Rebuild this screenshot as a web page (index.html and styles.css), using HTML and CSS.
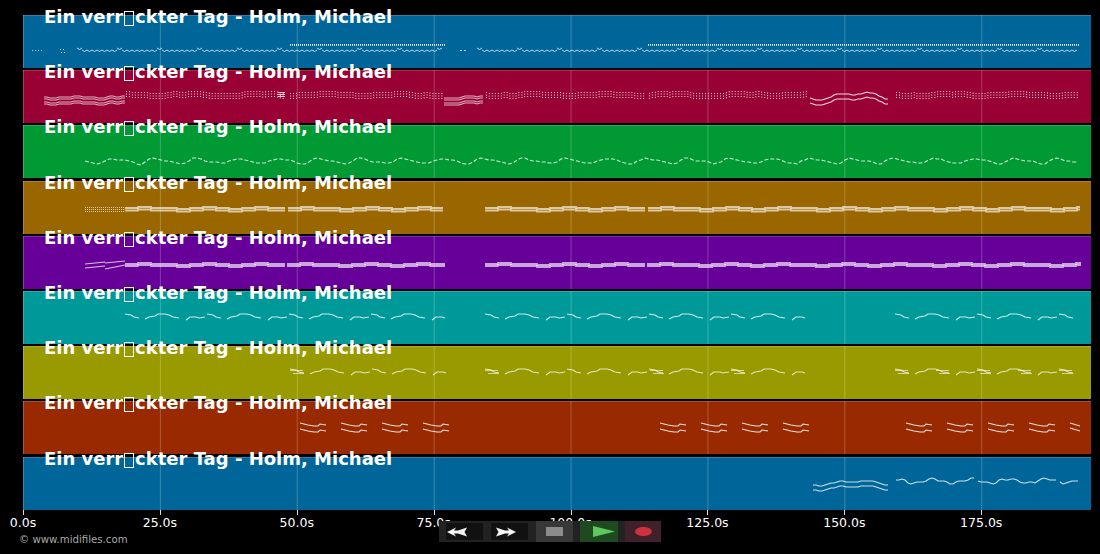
FILE: index.html
```html
<!DOCTYPE html>
<html lang="de">
<head>
<meta charset="utf-8" />
<title>Ein verrückter Tag - Holm, Michael</title>
<link rel="stylesheet" href="styles.css">
</head>

<body>

<div class="chart">
  <div class="tracks" id="tracks"></div>

  <div class="axis">
    <div class="tick"><span>0.0s</span></div>
    <div class="tick"><span>25.0s</span></div>
    <div class="tick"><span>50.0s</span></div>
    <div class="tick"><span>75.0s</span></div>
    <div class="tick"><span>100.0s</span></div>
    <div class="tick"><span>125.0s</span></div>
    <div class="tick"><span>150.0s</span></div>
    <div class="tick"><span>175.0s</span></div>
  </div>

  <div class="copyright">© www.midifiles.com</div>
</div>

<div class="controls">
  <button class="ctl ctl-rew">
    <svg width="21" height="10" viewBox="0 0 21 10"><path d="M0 5 L9 0.5 L7 3.5 H11 L20 0.5 L17.5 5 L20 9.5 L11 6.5 H7 L9 9.5 Z" fill="#f2f2f2"/></svg>
  </button>
  <button class="ctl ctl-fwd">
    <svg width="21" height="10" viewBox="0 0 21 10"><path d="M20 5 L11 0.5 L13 3.5 H9 L0 0.5 L2.5 5 L0 9.5 L9 6.5 H13 L11 9.5 Z" fill="#f2f2f2"/></svg>
  </button>
  <button class="ctl ctl-stop"><span class="stop-box"></span></button>
  <button class="ctl ctl-play">
    <svg width="22" height="11" viewBox="0 0 22 11"><path d="M0 0 L22 5.5 L0 11 Z" fill="#5fc85f"/></svg>
  </button>
  <button class="ctl ctl-rec"><span class="rec-dot"></span></button>
</div>

<script src="script.js"></script>

</body>
</html>
```

FILE: styles.css
```css
body { margin: 0; height: 554px; overflow: hidden; background-color: #000; color: #fff; font-family: "DejaVu Sans", sans-serif; }

.chart { padding: 15px 9px 0 23px; }

.tracks { display: flex; flex-direction: column; gap: 2.2px; }

.track {
  position: relative;
  height: 53px;
  border-top: 1px solid rgba(255, 255, 255, 0.18);
  box-sizing: border-box;
  background-image: linear-gradient(90deg, rgba(255, 255, 255, 0.22) 1px, transparent 1px);
  background-size: 136.9px 100%;
  background-position: 0 0;
}

.track svg { display: block; position: absolute; left: 0; top: -1px; }

.track-title {
  position: absolute;
  left: 21px;
  top: -10px;
  font-size: 18px;
  font-weight: bold;
  line-height: 22px;
  white-space: nowrap;
}

/* empty box where the name has a character the font does not have */
.tofu {
  display: inline-block;
  width: 8px;
  height: 13px;
  margin: 0 0.8px 0 1px;
  border: 1px solid #fff;
  vertical-align: -3px;
}

.blue { background-color: #006699; }
.crimson { background-color: #990033; }
.green { background-color: #009933; }
.brown { background-color: #996600; }
.purple { background-color: #660099; }
.teal { background-color: #009999; }
.olive { background-color: #999900; }
.rust { background-color: #992900; }

.axis { display: flex; }

.tick { flex: 0 0 136.9px; height: 25px; font-size: 12.5px; line-height: 15px; color: #fff; }
.tick::before { content: ""; display: block; width: 1px; height: 5px; background-color: #ddd; }
.tick span { display: inline-block; transform: translateX(-50%); }

.copyright { margin: -2px 0 0 -4px; font-size: 10.2px; line-height: 14px; color: #a8a8a8; }

.controls {
  position: absolute;
  left: 439px;
  top: 521px;
  width: 222px;
  height: 21px;
  display: flex;
  background-color: #222;
}

.ctl { border: none; padding: 0; height: 21px; display: flex; align-items: center; justify-content: center; }

.ctl-rew { width: 37px; margin-left: 7px; background-color: #111; justify-content: flex-start; padding-left: 1px; height: 17px; align-self: center; }
.ctl-fwd { width: 37px; margin-left: 8px; background-color: #111; justify-content: flex-start; padding-left: 5px; height: 17px; align-self: center; }
.ctl-stop { width: 37px; margin-left: 8px; background-color: #383838; }
.ctl-play { width: 38px; margin-left: 7px; background-color: #1f4a1f; padding-left: 13px; box-sizing: border-box; justify-content: flex-start; }
.ctl-rec { width: 36px; margin-left: 7px; background-color: #40202a; }

.stop-box { width: 17px; height: 9px; background-color: #8c8c8c; }
.rec-dot { width: 17px; height: 9px; border-radius: 50%; background-color: #cc3340; }
```

FILE: script.js
```js
// draws the tracks and their note lines, x is page x, y is from the top of the band
const NS = "http://www.w3.org/2000/svg";

function stepY(x, y, amp, period) {
  return y + Math.round(amp * Math.sin(x / period) + amp * 0.5 * Math.sin(x / (period * 0.37)));
}

function addLine(svg, d, dash, op, width) {
  const p = document.createElementNS(NS, "path");
  p.setAttribute("d", d);
  p.setAttribute("fill", "none");
  p.setAttribute("stroke", "#fff");
  p.setAttribute("stroke-width", width || 1.1);
  p.setAttribute("opacity", op || 0.8);
  if (dash) p.setAttribute("stroke-dasharray", dash);
  svg.appendChild(p);
}

function wavePath(x0, x1, y, amp, period) {
  let d = "";
  for (let x = x0; x <= x1; x += 3) {
    d += (d ? "L" : "M") + x + " " + stepY(x, y, amp, period);
  }
  return d;
}

// row of small arcs with a little jump every 40px
function scallopPath(x0, x1, y) {
  let d = "";
  for (let x = x0; x + 5 <= x1; x += 5) {
    const up = (x - x0) % 40 < 5 ? -2 : 0;
    d += "M" + x + " " + (y + up) + "q2.5 3 5 0";
  }
  return d;
}

// falling line that climbs back, period 41
function sawPath(x0, x1, y) {
  let d = "";
  for (let x = x0; x <= x1; x += 4) {
    const t = (x - x0 + 14) % 41;
    const off = t < 29 ? -3 + t * 6 / 29 : 3 - (t - 29) * 6 / 12;
    d += (d ? "L" : "M") + x + " " + Math.round(y + off + 0.6 * Math.sin(x * 1.3));
  }
  return d;
}

// flat stretches that shift a pixel now and then
function blockPath(x0, x1, y) {
  const steps = [0, -1, 0, 0, 1, 0, -1, 0, 1];
  let d = "M" + x0 + " " + y;
  let i = 0;
  for (let x = x0; x < x1; x += 13) {
    d += "V" + (y + steps[i % steps.length]) + "H" + Math.min(x + 13, x1);
    i++;
  }
  return d;
}

// one repeated tune, cut off at x1
const MOTIF = [
  [[0, -2], [6, -1], [9, 1], [14, 2]],
  [[20, 3], [24, 1], [30, 0], [33, -2], [40, -2], [44, -1], [48, 1], [54, 2]],
  [[61, 4], [65, 1], [71, 1], [74, 2], [80, 1]]
];

function motifPaths(x0, x1, y, period) {
  const out = [];
  for (let s = x0; s < x1; s += period) {
    MOTIF.forEach(function (st) {
      const pts = st.filter(function (p) { return s + p[0] <= x1; });
      if (pts.length > 1) {
        out.push("M" + pts.map(function (p) { return (s + p[0]) + " " + (y + p[1]); }).join("L"));
      }
    });
  }
  return out;
}

// short falling pairs, used for the rust band
function fallPaths(x0, x1, y, period) {
  const out = [];
  for (let s = x0; s + 20 <= x1 + 2; s += period) {
    [0, 6].forEach(function (dy) {
      out.push("M" + s + " " + (y + dy) + "L" + (s + 8) + " " + (y + dy + 2) + "L" + (s + 14) + " " + (y + dy + 3) + "L" + (s + 18) + " " + (y + dy + 3) + "L" + (s + 20) + " " + (y + dy + 1) + "L" + (s + 26) + " " + (y + dy + 2));
    });
  }
  return out;
}

const TRACKS = [
  { color: "blue", draw: function (s) {
    addLine(s, "M32 35.5H42", "1 2", 0.7);
    addLine(s, "M60 34.5H65M61 37.5H65", "1 2", 0.7);
    addLine(s, "M460 35.5H466", "2 2", 0.7);
    [[77, 445], [477, 1080]].forEach(function (r) {
      addLine(s, scallopPath(r[0], r[1], 35), "", 0.75, 1);
    });
    [[290, 445], [648, 1080]].forEach(function (r) {
      addLine(s, "M" + r[0] + " 29.5H" + r[1], "1 1", 0.95);
      addLine(s, "M" + r[0] + " 30.5H" + r[1], "1 1", 0.7);
    });
  } },
  { color: "crimson", draw: function (s) {
    [[44, 125], [444, 485]].forEach(function (r) {
      [27, 29, 32, 34].forEach(function (y) {
        addLine(s, wavePath(r[0], r[1], y, 1, 7), "", 0.7);
      });
    });
    [[126, 285], [290, 443], [486, 645], [649, 810], [896, 1080]].forEach(function (r) {
      [22.5, 25, 27.5].forEach(function (y) {
        addLine(s, wavePath(r[0], r[1], y, 1, 11), "1 2", 0.85);
      });
    });
    addLine(s, "M278 22.5H285M278 24.5H285M278 26.5H285", "", 0.8);
    addLine(s, wavePath(810, 890, 26, 3, 14), "", 0.85);
    addLine(s, wavePath(810, 890, 31, 3, 14), "", 0.85);
  } },
  { color: "green", draw: function (s) {
    addLine(s, sawPath(85, 1080, 36), "4 2", 0.8);
  } },
  { color: "brown", draw: function (s) {
    [26.5, 28.5, 30.5].forEach(function (y) {
      addLine(s, "M85 " + y + "H125", "1 1", 0.65);
    });
    [[125, 285], [288, 443], [485, 645], [648, 1080]].forEach(function (r) {
      addLine(s, blockPath(r[0], r[1], 27), "", 0.65, 1.8);
      addLine(s, blockPath(r[0], r[1], 29.5), "", 0.65, 1.8);
    });
  } },
  { color: "purple", draw: function (s) {
    addLine(s, "M85 28L105 26M105 27L125 25M85 32L105 30M105 33L125 29", "", 0.75);
    [[125, 285], [287, 445], [485, 645], [647, 1081]].forEach(function (r) {
      addLine(s, blockPath(r[0], r[1], 28), "", 0.65, 1.8);
      addLine(s, blockPath(r[0], r[1], 30), "", 0.65, 1.8);
    });
  } },
  { color: "teal", draw: function (s) {
    [[125, 448], [485, 808], [895, 1075]].forEach(function (r) {
      motifPaths(r[0], r[1], 25, 82).forEach(function (d) { addLine(s, d, "", 0.8); });
    });
  } },
  { color: "olive", draw: function (s) {
    [[290, 448], [485, 808], [895, 1075]].forEach(function (r) {
      motifPaths(r[0], r[1], 25, 82).forEach(function (d) { addLine(s, d, "", 0.75); });
    });
    [290, 895, 936, 977, 1018, 1059, 485, 650, 731].forEach(function (x) {
      addLine(s, "M" + x + " 24.5H" + (x + 13) + "M" + (x + 3) + " 27.5H" + (x + 14), "", 0.6);
    });
  } },
  { color: "rust", draw: function (s) {
    [[300, 448], [660, 808], [906, 1060]].forEach(function (r) {
      fallPaths(r[0], r[1], 22, 41).forEach(function (d) { addLine(s, d, "", 0.85); });
    });
    addLine(s, "M1070 22L1080 25M1070 27L1080 30", "", 0.85);
  } },
  { color: "blue", draw: function (s) {
    addLine(s, wavePath(813, 890, 26, 2, 14), "", 0.8);
    addLine(s, wavePath(813, 890, 31, 2, 14), "", 0.8);
    [[896, 976], [978, 1058], [1060, 1078]].forEach(function (r) {
      addLine(s, wavePath(r[0], r[1], 24, 2, 6), "", 0.8);
    });
  } }
];

const tracks = document.getElementById("tracks");

TRACKS.forEach(function (t) {
  const el = document.createElement("div");
  el.className = "track " + t.color;

  const svg = document.createElementNS(NS, "svg");
  svg.setAttribute("width", "1068");
  svg.setAttribute("height", "53");
  svg.setAttribute("viewBox", "23 0 1068 53");
  t.draw(svg);
  el.appendChild(svg);

  const title = document.createElement("div");
  title.className = "track-title";
  title.innerHTML = 'Ein verr<span class="tofu"></span>ckter Tag - Holm, Michael';
  el.appendChild(title);

  tracks.appendChild(el);
});
```
